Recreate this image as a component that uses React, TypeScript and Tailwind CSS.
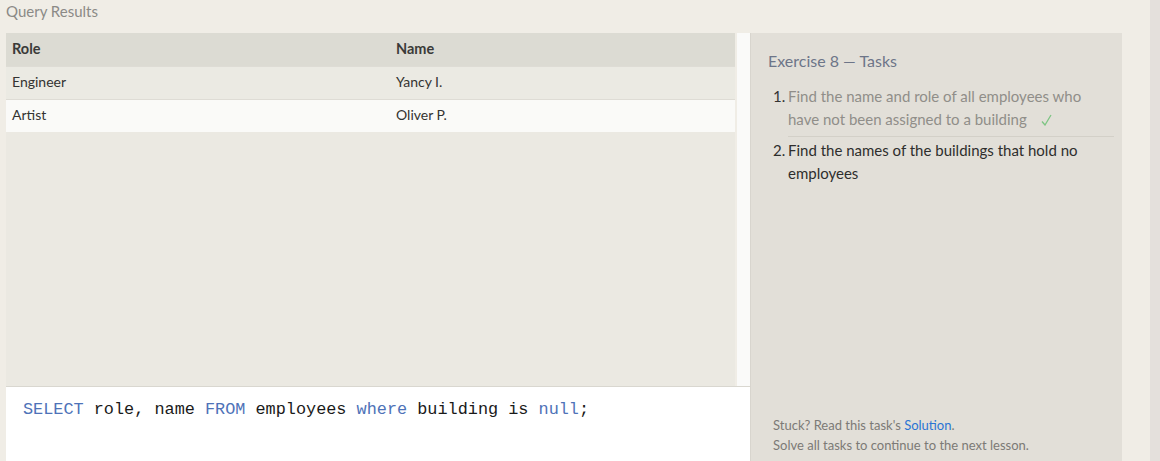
import React from 'react'

const rows = [
  { role: 'Engineer', name: 'Yancy I.' },
  { role: 'Artist', name: 'Oliver P.' },
]

function Kw({ children }: { children: React.ReactNode }) {
  return <span className="text-[#4e72b8]">{children}</span>
}

export default function App() {
  return (
    <div className="flex h-[461px] w-full overflow-hidden bg-[#f0ede6] font-['Lato',sans-serif]">
      {/* Left: results + editor */}
      <div className="flex w-[750px] shrink-0 flex-col pl-[6px]">
        <div className="flex h-[33px] items-start text-[15px] leading-[22px] text-[#8b8a86]">
          Query Results
        </div>
        <div className="flex h-[354px] border-b border-[#d9d7d0]">
          <div className="w-[729px] bg-[#ebe9e2]">
            <div className="flex h-[33px] items-center pb-[2px] bg-[#dcdbd3] text-[14.5px] font-bold text-[#3a3a38]">
              <div className="w-[390px] pl-[6px]">Role</div>
              <div>Name</div>
            </div>
            {rows.map((r, i) => (
              <div
                key={r.role}
                className={`flex h-[33px] items-center pb-[4px] border-t border-[#dedcd5] text-[14px] text-[#333331] ${
                  i % 2 === 0 ? 'bg-[#ebeae3]' : 'bg-[#fafaf8]'
                }`}
              >
                <div className="w-[390px] pl-[6px]">{r.role}</div>
                <div>{r.name}</div>
              </div>
            ))}
          </div>
          <div className="ml-[2px] w-[13px] bg-[#fafaf9]" />
        </div>
        <div className="flex-1 bg-white pl-[17px] pt-[10px] font-['Liberation_Mono',monospace] text-[16.85px] text-[#1a1a1a]">
          <Kw>SELECT</Kw> role, name <Kw>FROM</Kw> employees <Kw>where</Kw> building is <Kw>null</Kw>;
        </div>
      </div>

      {/* Tasks panel */}
      <div className="mt-[33px] flex w-[372px] shrink-0 flex-col border-l border-[#d8d5ce] bg-[#e2dfd8] pl-[17px] pr-[8px]">
        <div className="pt-[16px] text-[16px] text-[#6d7588]">Exercise 8 — Tasks</div>
        <ol className="mt-[12px] text-[15px] leading-[23px]">
          <li className="flex pb-[2px]">
            <span className="w-[20px] shrink-0 pl-[5px] text-[#333]">1.</span>
            <span className="flex-1 border-b border-[#d3d0c8] pb-[5px] text-[#908e89]">
              Find the name and role of all employees who have not been assigned to a building
              <svg className="ml-[14px] inline-block align-[-1px]" width="11" height="12" viewBox="0 0 11 12">
                <path d="M1 7.5 L4 11 L10 1" fill="none" stroke="#7dc583" strokeWidth="1.3" />
              </svg>
            </span>
          </li>
          <li className="flex">
            <span className="w-[20px] shrink-0 pl-[5px] text-[#2e2e2d]">2.</span>
            <span className="flex-1 text-[#2e2e2d]">Find the names of the buildings that hold no employees</span>
          </li>
        </ol>
        <div className="mt-auto pb-[6px] pl-[5px] text-[13px] leading-[20px] text-[#7c7a76]">
          <div>
            Stuck? Read this task's <span className="text-[#2a74d4]">Solution</span>.
          </div>
          <div>Solve all tasks to continue to the next lesson.</div>
        </div>
      </div>

      <div className="flex-1" />
      <div className="w-[10px] shrink-0 bg-[#e4e0dc]" />
    </div>
  )
}
